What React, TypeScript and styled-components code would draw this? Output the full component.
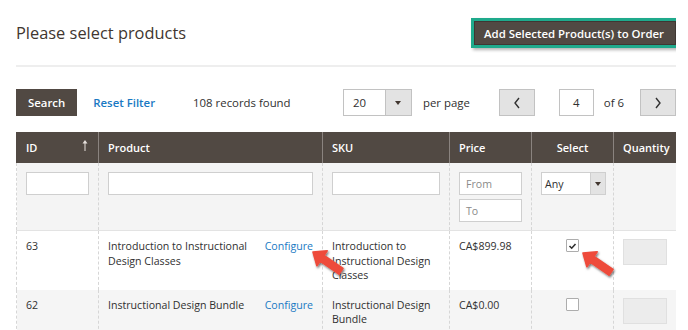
import styled, { createGlobalStyle } from "styled-components";

const GlobalStyle = createGlobalStyle`
  body {
    margin: 0;
    background: #fff;
    font-family: "Open Sans", "Liberation Sans", Arial, sans-serif;
    color: #303030;
  }
  * { box-sizing: border-box; }
`;

interface Product {
  id: number;
  name: string;
  sku: string;
  price: string;
  checked: boolean;
}

const products: Product[] = [
  {
    id: 63,
    name: "Introduction to Instructional Design Classes",
    sku: "Introduction to Instructional Design Classes",
    price: "CA$899.98",
    checked: true,
  },
  {
    id: 62,
    name: "Instructional Design Bundle",
    sku: "Instructional Design Bundle",
    price: "CA$0.00",
    checked: false,
  },
];

const Caret = () => <CaretShape />;

const Chevron = ({ dir }: { dir: "left" | "right" }) => (
  <svg width="8" height="12" viewBox="0 0 8 12">
    <polyline
      points={dir === "left" ? "6,1 2,6 6,11" : "2,1 6,6 2,11"}
      fill="none"
      stroke="#303030"
      strokeWidth="1.4"
    />
  </svg>
);

// sort direction marker in the ID header
const SortUp = () => (
  <svg width="6" height="11" viewBox="0 0 6 11">
    <line x1="3" y1="1.5" x2="3" y2="11" stroke="#e6e0dc" strokeWidth="1" />
    <polygon points="3,0 5.5,3.5 0.5,3.5" fill="#e6e0dc" />
  </svg>
);

const Pointer = ({ x, y }: { x: number; y: number }) => (
  <PointerSvg width="40" height="32" viewBox="0 0 40 32" $x={x} $y={y}>
    <defs>
      <filter id={`sh${x}`} x="-20%" y="-20%" width="150%" height="150%">
        <feDropShadow dx="1" dy="1.5" stdDeviation="1" floodColor="#000" floodOpacity="0.55" />
      </filter>
    </defs>
    <polygon
      points="2,2 16.2,0.8 13,5.4 32,18.4 28,24.2 9.1,11.1 5.9,15.7"
      fill="#ee4b3b"
      stroke="#ee4b3b"
      strokeWidth="1.6"
      strokeLinejoin="round"
      filter={`url(#sh${x})`}
    />
  </PointerSvg>
);

const App = () => {
  return (
    <>
      <GlobalStyle />
      <Page>
        <Header>
          <Title>Please select products</Title>
          <AddButton>Add Selected Product(s) to Order</AddButton>
        </Header>

        <Toolbar>
          <Group>
            <DarkButton>Search</DarkButton>
            <LinkButton>Reset Filter</LinkButton>
            <Found>108 records found</Found>
          </Group>
          <Group>
            <PageSize>
              <PageSizeValue>20</PageSizeValue>
              <PageSizeToggle>
                <Caret />
              </PageSizeToggle>
            </PageSize>
            <ToolbarText $ml={11}>per page</ToolbarText>
            <NavButton $ml={29}>
              <Chevron dir="left" />
            </NavButton>
            <PageInput $ml={24}>4</PageInput>
            <ToolbarText $ml={10}>of 6</ToolbarText>
            <NavButton $ml={16}>
              <Chevron dir="right" />
            </NavButton>
          </Group>
        </Toolbar>

        <Grid>
          <colgroup>
            <col style={{ width: 82 }} />
            <col style={{ width: 224 }} />
            <col style={{ width: 127 }} />
            <col style={{ width: 82 }} />
            <col style={{ width: 82 }} />
            <col style={{ width: 63 }} />
          </colgroup>
          <thead>
            <tr>
              <Th>
                <SortHead>
                  ID
                  <SortUp />
                </SortHead>
              </Th>
              <Th>Product</Th>
              <Th>SKU</Th>
              <Th>Price</Th>
              <Th $center>Select</Th>
              <Th $center>Quantity</Th>
            </tr>
          </thead>
          <tbody>
            <FilterRow>
              <FilterCell>
                <FilterInput />
              </FilterCell>
              <FilterCell>
                <FilterInput />
              </FilterCell>
              <FilterCell>
                <FilterInput />
              </FilterCell>
              <FilterCell>
                <RangeStack>
                  <FilterInput>From</FilterInput>
                  <FilterInput>To</FilterInput>
                </RangeStack>
              </FilterCell>
              <FilterCell>
                <AnySelect>
                  <AnyValue>Any</AnyValue>
                  <AnyToggle>
                    <Caret />
                  </AnyToggle>
                </AnySelect>
              </FilterCell>
              <FilterCell />
            </FilterRow>
            {products.map((p, i) => (
              <Row key={p.id} $even={i % 2 === 1}>
                <Td>{p.id}</Td>
                <Td>
                  <ProductCell>
                    <ProductName>{p.name}</ProductName>
                    <Configure>Configure</Configure>
                  </ProductCell>
                </Td>
                <Td>{p.sku}</Td>
                <Td>{p.price}</Td>
                <Td>
                  <CheckBox>
                    {p.checked && (
                      <svg width="9" height="8" viewBox="0 0 9 8">
                        <polyline
                          points="1.5,4 3.7,6.2 7.5,2"
                          fill="none"
                          stroke="#303030"
                          strokeWidth="1.6"
                        />
                      </svg>
                    )}
                  </CheckBox>
                </Td>
                <Td>
                  <QtyInput />
                </Td>
              </Row>
            ))}
          </tbody>
        </Grid>

        <Pointer x={295} y={228} />
        <Pointer x={565} y={229} />
      </Page>
    </>
  );
};

const Page = styled.div`
  position: relative;
  width: 660px;
  margin-left: 16px;
  padding-top: 21px;
  overflow: hidden;
  height: 330px;
`;

const Header = styled.div`
  display: flex;
  justify-content: space-between;
  align-items: center;
  padding-bottom: 20px;
  border-bottom: 2px solid #eeeeee;
`;

const Title = styled.h1`
  margin: 0;
  font-size: 16.4px;
  font-weight: 400;
  line-height: 24px;
  color: #41362f;
`;

const AddButton = styled.button`
  height: 24px;
  padding: 0 11px 0 9px;
  background: #514943;
  border: 1px solid #3f3733;
  color: #fff;
  font-family: inherit;
  font-size: 11.4px;
  font-weight: 600;
  box-shadow: 0 0 0 3px #1faa8c, 2px 2px 3px 3px rgba(0, 0, 0, 0.3);
`;

const Toolbar = styled.div`
  display: flex;
  justify-content: space-between;
  align-items: center;
  margin-top: 22px;
  height: 27px;
  font-size: 11.4px;
`;

const Group = styled.div`
  display: flex;
  align-items: center;
  height: 100%;
`;

const DarkButton = styled.button`
  height: 27px;
  padding: 0 12px;
  background: #514943;
  border: none;
  color: #fff;
  font-family: inherit;
  font-size: 11.4px;
  font-weight: 600;
`;

const LinkButton = styled.button`
  margin-left: 16px;
  padding: 0;
  background: none;
  border: none;
  color: #1979c3;
  font-family: inherit;
  font-size: 11.4px;
  font-weight: 600;
`;

const Found = styled.span`
  margin-left: 38px;
  color: #303030;
`;

const ToolbarText = styled.span<{ $ml: number }>`
  margin-left: ${(p) => p.$ml}px;
  color: #303030;
`;

const PageSize = styled.div`
  display: flex;
  height: 27px;
`;

const PageSizeValue = styled.div`
  width: 43px;
  padding-left: 9px;
  display: flex;
  align-items: center;
  border: 1px solid #c2c2c2;
  background: #fff;
`;

const PageSizeToggle = styled.div`
  width: 26px;
  display: flex;
  align-items: center;
  justify-content: center;
  background: #e3e3e3;
  border: 1px solid #c2c2c2;
  border-left: none;
`;

const CaretShape = styled.span`
  width: 0;
  height: 0;
  border-left: 3px solid transparent;
  border-right: 3px solid transparent;
  border-top: 4px solid #41362f;
`;

const NavButton = styled.div<{ $ml: number }>`
  margin-left: ${(p) => p.$ml}px;
  width: 36px;
  height: 27px;
  display: flex;
  align-items: center;
  justify-content: center;
  background: #e3e3e3;
  border: 1px solid #c2c2c2;
`;

const PageInput = styled.div<{ $ml: number }>`
  margin-left: ${(p) => p.$ml}px;
  width: 35px;
  height: 27px;
  display: flex;
  align-items: center;
  justify-content: center;
  background: #fff;
  border: 1px solid #c2c2c2;
`;

const Grid = styled.table`
  margin-top: 16px;
  width: 660px;
  table-layout: fixed;
  border-collapse: collapse;
  font-size: 10.6px;
  color: #303030;
`;

const Th = styled.th<{ $center?: boolean }>`
  height: 31px;
  padding: 0 9px;
  background: #514943;
  color: #fff;
  font-size: 11px;
  font-weight: 600;
  text-align: ${(p) => (p.$center ? "center" : "left")};
  border-left: 1px solid #8a837f;
  border-right: 1px solid #8a837f;
  &:first-child {
    border-left-color: #514943;
  }
  &:last-child {
    border-right-color: #514943;
  }
`;

const SortHead = styled.div`
  display: flex;
  justify-content: space-between;
  align-items: center;
  padding-right: 1px;
  svg {
    margin-top: -4px;
  }
`;

const FilterRow = styled.tr`
  background: #f4f4f4;
  border-bottom: 1px solid #e3e3e3;
`;

const FilterCell = styled.td`
  height: 67px;
  padding: 9px 9px 8px;
  vertical-align: top;
  border-left: 1px dashed #d6d6d6;
  border-right: 1px dashed #d6d6d6;
`;

const FilterInput = styled.div`
  height: 23px;
  width: 100%;
  padding-left: 6px;
  display: flex;
  align-items: center;
  background: #fff;
  border: 1px solid #cfcfcf;
  color: #8a8a8a;
  font-size: 10.6px;
`;

const RangeStack = styled.div`
  display: flex;
  flex-direction: column;
  gap: 4px;
`;

const AnySelect = styled.div`
  display: flex;
  height: 23px;
  width: 65px;
  border: 1px solid #cfcfcf;
  background: #fff;
`;

const AnyValue = styled.div`
  flex: 1;
  padding-left: 3px;
  display: flex;
  align-items: center;
  color: #303030;
`;

const AnyToggle = styled.div`
  width: 15px;
  display: flex;
  align-items: center;
  justify-content: center;
  background: #e3e3e3;
  border-left: 1px solid #cfcfcf;
`;

const Row = styled.tr<{ $even: boolean }>`
  background: ${(p) => (p.$even ? "#f5f5f5" : "#fff")};
`;

const Td = styled.td`
  padding: 8px 9px 7px;
  vertical-align: top;
  line-height: 14.5px;
  border-left: 1px dashed #d6d6d6;
  border-right: 1px dashed #d6d6d6;
`;

const ProductCell = styled.div`
  display: flex;
  justify-content: space-between;
  gap: 8px;
`;

const ProductName = styled.span`
  max-width: 150px;
`;

const Configure = styled.a`
  color: #1979c3;
  white-space: nowrap;
`;

const CheckBox = styled.div`
  width: 13px;
  height: 13px;
  margin: 0 auto;
  display: flex;
  align-items: center;
  justify-content: center;
  background: #fff;
  border: 1px solid #adadad;
  border-radius: 1px;
`;

const QtyInput = styled.div`
  width: 44px;
  height: 26px;
  background: #ececec;
  border: 1px solid #e0e0e0;
`;

const PointerSvg = styled.svg<{ $x: number; $y: number }>`
  position: absolute;
  left: ${(p) => p.$x}px;
  top: ${(p) => p.$y + 22}px;
  pointer-events: none;
`;

export default App;
